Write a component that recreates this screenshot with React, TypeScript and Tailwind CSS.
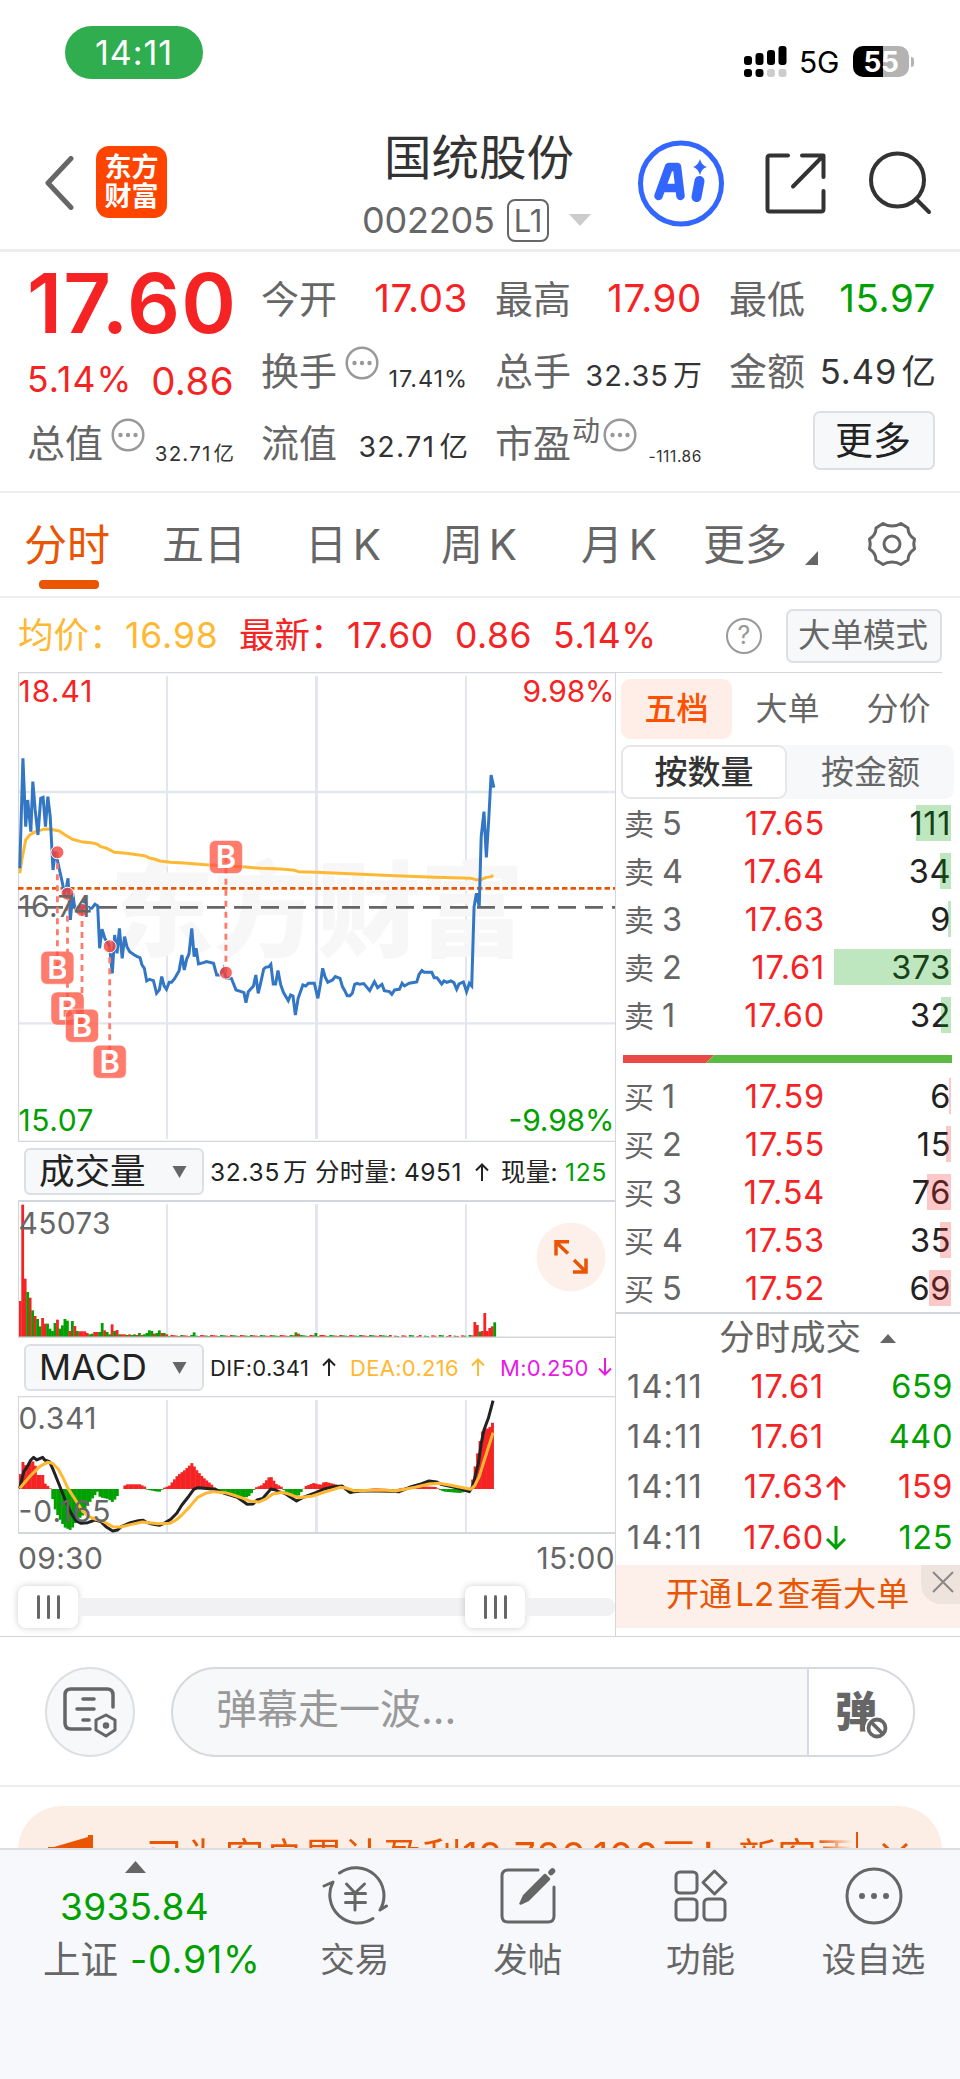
import type { ReactNode } from "react";

const FONT = "font-['Inter','Noto_Sans_CJK_SC',sans-serif]";

// Chart samples: x is 2.529 units per pixel, y is 3 units per pixel
const PRICE =
  "50,625 58,295 65,500 70,420 78,515 83,365 89,450 96,525 103,415 109,412 115,500 121,410 127,470 134,630 140,575 145,600 158,670 163,700 167,690 172,655 178,780 184,700 188,735 195,755 208,750 214,715 220,745 232,745 240,733 247,738 252,865 258,808 265,835 277,858 284,940 290,825 296,880 302,805 309,895 315,830 321,860 328,875 340,885 347,890 354,893 359,915 365,925 371,963 378,958 388,962 396,1000 403,990 409,950 415,978 421,988 428,967 434,967 441,957 453,932 460,885 466,930 472,898 478,882 485,805 491,890 496,865 502,912 515,908 522,905 540,910 548,945 555,945 565,925 572,955 585,955 597,990 610,995 617,998 622,1028 628,995 641,978 647,945 653,1000 660,965 667,927 672,922 680,920 685,913 691,972 697,972 703,932 710,975 717,998 729,1022 735,1005 741,1008 747,1065 754,1015 766,975 773,978 780,970 795,970 804,1015 810,975 816,925 822,950 829,967 841,960 848,950 860,955 866,980 872,992 878,1007 885,1007 891,1000 897,973 903,970 910,973 920,971 935,992 947,965 955,983 966,973 972,992 985,995 991,1003 998,990 1010,988 1017,970 1023,978 1035,970 1054,966 1060,943 1067,932 1073,937 1092,937 1098,953 1105,953 1117,972 1123,963 1130,967 1140,963 1148,968 1155,988 1161,972 1172,966 1180,995 1187,970 1193,978 1199,740 1205,700 1212,740 1217,530 1224,455 1230,592 1236,480 1242,345 1249,383";

const AVERAGE =
  "50,640 55,600 65,540 75,525 90,515 110,508 125,507 150,513 165,525 183,538 205,545 230,548 245,552 255,560 270,565 290,577 320,580 365,587 380,595 390,597 405,603 430,607 465,609 520,614 620,621 660,625 710,627 745,631 755,635 800,637 900,642 1000,647 1100,652 1190,655 1203,659 1217,659 1228,653 1243,650 1247,645";

const DIF =
  "50,325 60,275 68,262 78,240 85,232 93,240 108,232 113,240 125,245 133,265 150,315 165,360 180,400 192,422 205,430 222,428 240,420 255,425 268,440 285,453 297,450 307,440 330,428 350,422 362,421 370,427 385,432 403,436 415,430 432,418 447,400 460,375 478,348 490,328 500,323 545,328 560,337 600,352 625,373 640,372 650,360 665,355 685,327 697,330 705,335 720,340 735,352 750,363 765,353 800,337 820,327 845,320 865,318 885,337 920,332 990,334 1010,335 1040,320 1065,312 1085,303 1105,306 1115,313 1160,325 1187,335 1195,320 1210,250 1217,190 1224,150 1235,115 1247,62";

const DEA =
  "50,325 75,290 100,260 120,247 133,250 147,267 160,295 172,325 190,358 210,395 225,410 240,417 262,425 285,440 305,441 330,434 360,426 400,431 430,430 445,420 460,405 480,380 500,352 520,340 540,335 570,338 590,345 615,355 635,364 655,366 675,355 690,342 715,337 730,342 755,353 790,348 830,333 860,322 875,324 895,332 970,330 1000,333 1050,322 1085,312 1110,310 1140,316 1190,328 1200,318 1212,290 1225,240 1247,158";

const HISTOGRAM = [
  [50, 20], [58, 83], [70, 65], [80, 80], [88, 85], [96, 42], [110, 42], [116, 16], [128, 3], [132, -5],
  [137, -50], [150, -85], [165, -115], [181, -124], [195, -95], [210, -80], [222, -50], [248, -8],
  [255, -25], [275, -30], [287, -40], [300, -18], [304, 0], [314, 0], [318, 14], [355, 14], [370, 6],
  [373, -2], [400, -8], [409, -8], [413, 2], [430, 10], [450, 40], [470, 58], [487, 78], [500, 55],
  [515, 35], [540, 10], [547, -2], [600, -22], [628, -25], [641, -8], [647, 4], [665, 12], [685, 40],
  [700, 15], [716, 5], [720, -5], [735, -15], [755, -22], [768, -2], [773, 8], [795, 18], [812, 12],
  [822, 22], [850, 14], [868, 6], [880, -8], [890, -16], [905, -3], [950, 2], [985, 0], [1000, -2],
  [1017, 3], [1060, 8], [1105, 6], [1112, -2], [1125, -8], [1165, -12], [1190, -5], [1197, 30],
  [1208, 100], [1220, 170], [1230, 185], [1238, 178], [1245, 200], [1252, 195],
];

// Positive = up minute (red), negative = down minute (green)
const VOLUME = [
  108, 397, 175, -135, 118, -80, 63, -54, -32, 57, 40, -40, -25, -18, -42, 52, -25, -35, -54, -49, 18, -48,
  33, -18, 17, 17, 17, 12, -8, -10, 15, 15, -15, -42, 20, -15, -8, 38, -18, 21, -8, 8, 8, -6, 8, -6, -8, 6,
  -12, 6, -8, -12, -20, -18, 10, -12, -20, 12, -12, 8,
];
const SPIKES: Record<number, number> = {
  70: -14, 111: -14, 112: 10, 119: -12, 122: 6, 183: 45, 184: 36, 185: -16, 186: 18, 187: 72, 188: 18,
  189: 27, 190: 32, 191: -44,
};
const STEP = 6.283;

function volumeAt(i: number) {
  if (i < VOLUME.length) return VOLUME[i];
  if (SPIKES[i]) return SPIKES[i];
  const size = 3 + ((i * 7) % 4);
  return (i * 13) % 11 < 6 ? size : -size;
}

function histogramAt(x: number) {
  for (let i = 1; i < HISTOGRAM.length; i++) {
    const [x0, y0] = HISTOGRAM[i - 1];
    const [x1, y1] = HISTOGRAM[i];
    if (x <= x1) return y0 + ((y1 - y0) * (x - x0)) / (x1 - x0);
  }
  return 0;
}

const MARKERS = [
  { x: 57.4, dot: 852.3, label: 967.7 },
  { x: 67.5, dot: 893.7, label: 1008.5 },
  { x: 82, dot: 910, label: 1025.7 },
  { x: 109.7, dot: 946.3, label: 1061.7 },
  { x: 225.9, dot: 972.7, label: 857 },
];

const SELLS = [
  { n: 5, price: "17.65", vol: 111, bar: 35 },
  { n: 4, price: "17.64", vol: 34, bar: 11 },
  { n: 3, price: "17.63", vol: 9, bar: 3 },
  { n: 2, price: "17.61", vol: 373, bar: 117 },
  { n: 1, price: "17.60", vol: 32, bar: 10 },
];

const BUYS = [
  { n: 1, price: "17.59", vol: 6, bar: 2 },
  { n: 2, price: "17.55", vol: 15, bar: 5 },
  { n: 3, price: "17.54", vol: 76, bar: 24 },
  { n: 4, price: "17.53", vol: 35, bar: 11 },
  { n: 5, price: "17.52", vol: 69, bar: 22 },
];

const TICKS = [
  { price: "17.61", arrow: "", vol: 659, up: false },
  { price: "17.61", arrow: "", vol: 440, up: false },
  { price: "17.63", arrow: "up", vol: 159, up: true },
  { price: "17.60", arrow: "down", vol: 125, up: false },
];

function StatusBar() {
  return (
    <div className="flex h-[110px] items-start justify-between pl-[65px] pr-[46px] pt-[26px]">
      <div className="flex h-[53px] w-[138px] items-center justify-center rounded-full bg-[#30ad4f] text-[34px] leading-none tracking-[1px] text-white">
        14:11
      </div>
      <div className="flex items-center pt-[19px]">
        <svg width="43" height="32" viewBox="0 0 43 32">
          <rect x="0" y="10" width="8" height="9" rx="3" />
          <rect x="11.5" y="7" width="8" height="12" rx="3" />
          <rect x="23" y="4" width="8" height="15" rx="3" />
          <rect x="34.5" y="0" width="8" height="19" rx="3" />
          <rect x="0" y="23" width="8" height="8" rx="3" />
          <rect x="11.5" y="23" width="8" height="8" rx="3" />
          <rect x="23" y="23" width="8" height="8" rx="3" fill="#ccc" />
          <rect x="34.5" y="23" width="8" height="8" rx="3" fill="#ccc" />
        </svg>
        <span className="ml-[12px] w-[41px] pt-[1px] text-[30px] leading-[32px] tracking-[-0.2px] text-black">5G</span>
        <div className="ml-[13px] flex h-[31px] w-[56px] items-center justify-center rounded-[10px] bg-[linear-gradient(90deg,#000_54%,#b3b3b3_54%)] text-[28px] font-bold leading-none tracking-[-0.5px] text-white">
          55
        </div>
        <div className="ml-[2px] h-[10px] w-[3px] rounded-r-full bg-[#b3b3b3]" />
      </div>
    </div>
  );
}

function Header() {
  return (
    <div className="flex h-[142px] items-start border-b-[3px] border-[#ededed] pl-[44px]">
      <svg className="mt-[46px]" width="30" height="54" viewBox="0 0 30 54" fill="none" stroke="#666" strokeWidth="5">
        <path d="M27 2.500L4 27L27 51.500" strokeLinecap="round" strokeLinejoin="round" />
      </svg>
      <div className="ml-[22px] mt-[36px] flex h-[72px] w-[71px] flex-col items-center justify-center rounded-[13px] bg-[#ff4400] text-[27px] font-bold leading-[29px] text-white">
        <span>东方</span>
        <span>财富</span>
      </div>
      <div className="ml-[195px] flex w-[231px] flex-col pt-[22px]">
        <div className="pl-[22px] text-[47.5px] leading-[52px] text-[#333]">国统股份</div>
        <div className="mt-[14px] flex items-center">
          <span className="w-[134px] text-[36px] leading-[44px] tracking-[-0.2px] text-[#666]">002205</span>
          <span className="ml-[11px] flex h-[43px] w-[42px] items-center justify-center rounded-[8px] border-2 border-[#666] text-[31px] leading-none text-[#666]">
            L1
          </span>
          <svg className="ml-[20px]" width="22" height="12" viewBox="0 0 22 12">
            <path d="M0 0H22L11 12Z" fill="#ccc" />
          </svg>
        </div>
      </div>
      <svg className="ml-[45px] mt-[30px]" width="86" height="87" viewBox="0 0 86 87">
        <circle cx="43" cy="43.500" r="40.500" fill="none" stroke="#3366ff" strokeWidth="5" />
        <path
          d="M20.500 56L31 27H39L42.500 56M25 48H41"
          fill="none"
          stroke="#3366ff"
          strokeWidth="8.500"
          strokeLinejoin="round"
          strokeLinecap="round"
        />
        <path d="M61.500 41L58.500 57" stroke="#3366ff" strokeWidth="10" strokeLinecap="round" />
        <path d="M62 19Q63.500 25.500 69 27Q63.500 28.500 62 35Q60 28.500 55 27Q60 25.500 62 19Z" fill="#3366ff" />
      </svg>
      <svg className="ml-[41px] mt-[43px]" width="61" height="61" viewBox="0 0 61 61" fill="none" stroke="#333" strokeWidth="4">
        <path d="M23 2.500H5Q2.500 2.500 2.500 5V56Q2.500 58.500 5 58.500H56Q58.500 58.500 58.500 56V38" strokeLinecap="round" />
        <path d="M37 2.500H58.500V24M57 4L28 33.500" strokeLinecap="round" strokeLinejoin="round" />
      </svg>
      <svg className="ml-[43px] mt-[41px]" width="64" height="64" viewBox="0 0 64 64" fill="none" stroke="#333" strokeWidth="4">
        <circle cx="28.500" cy="29" r="26.500" />
        <path d="M47 48L60 61" strokeLinecap="round" />
      </svg>
    </div>
  );
}

function MoreDots({ className }: { className?: string }) {
  return (
    <svg className={className} width="34" height="34" viewBox="0 0 34 34">
      <circle cx="17" cy="17" r="15.300" fill="none" stroke="#999" strokeWidth="2.500" />
      <circle cx="9.500" cy="17" r="2.200" fill="#999" />
      <circle cx="17" cy="17" r="2.200" fill="#999" />
      <circle cx="24.500" cy="17" r="2.200" fill="#999" />
    </svg>
  );
}

function Stat({ label, children, extra }: { label: string; children: ReactNode; extra?: ReactNode }) {
  return (
    <div className="flex h-[72px] w-[207px] items-center justify-between whitespace-nowrap">
      <div className="flex items-center">
        <span className="pt-[2px] text-[38px] leading-none text-[#666]">{label}</span>
        {extra}
      </div>
      {children}
    </div>
  );
}

function Quote() {
  return (
    <div className="flex h-[241px] gap-[27px] border-b-2 border-[#eee] pl-[27px] pt-[10px] leading-none text-[#333]">
      <div className="flex w-[207px] flex-col">
        <div className="flex h-[82px] items-center whitespace-nowrap text-[83px] font-semibold leading-none tracking-[1.1px] text-[#f52323]">
          17.60
        </div>
        <div className="flex h-[62px] items-center justify-between pt-[10px] text-[#f52323]">
          <span className="text-[35.5px] leading-none tracking-[1.1px]">5.14%</span>
          <span className="pt-[2px] text-[38.5px] leading-none tracking-[0.4px]">0.86</span>
        </div>
        <Stat label="总值" extra={<MoreDots className="mb-[15px] ml-[8px]" />}>
          <span className="pt-[24px] text-[20.5px] tracking-[1.2px]">
            32.71<span className="ml-[2px] tracking-normal">亿</span>
          </span>
        </Stat>
      </div>
      <div>
        <Stat label="今开">
          <span className="pt-[1px] text-[38.5px] tracking-[0.6px] text-[#f52323]">17.03</span>
        </Stat>
        <Stat label="换手" extra={<MoreDots className="mb-[15px] ml-[8px]" />}>
          <span className="pt-[18px] text-[23.5px] tracking-[0.9px]">17.41%</span>
        </Stat>
        <Stat label="流值">
          <span className="pt-[11px] text-[28.5px] tracking-[1.3px]">
            32.71<span className="ml-[4px] tracking-normal">亿</span>
          </span>
        </Stat>
      </div>
      <div>
        <Stat label="最高">
          <span className="pt-[1px] text-[38.5px] tracking-[0.6px] text-[#f52323]">17.90</span>
        </Stat>
        <Stat label="总手">
          <span className="pt-[11px] text-[29px] tracking-[1px]">
            32.35<span className="ml-[4px] tracking-normal">万</span>
          </span>
        </Stat>
        <Stat
          label="市盈"
          extra={
            <>
              <span className="mb-[22px] ml-[1px] text-[28px] leading-none text-[#666]">动</span>
              <MoreDots className="mb-[15px] ml-[3px]" />
            </>
          }
        >
          <span className="pt-[30px] text-[15.5px] tracking-[0.6px]">-111.86</span>
        </Stat>
      </div>
      <div>
        <Stat label="最低">
          <span className="pt-[1px] text-[38.5px] tracking-[0.6px] text-[#00a000]">15.97</span>
        </Stat>
        <Stat label="金额">
          <span className="pt-[4px] text-[34.5px] tracking-[1px]">
            5.49<span className="ml-[4px] tracking-normal">亿</span>
          </span>
        </Stat>
        <div className="flex h-[68px] items-center justify-end">
          <button className="mr-[1px] flex h-[59px] w-[122px] items-center justify-center rounded-[7px] border-2 border-[#dcdfe4] bg-[#f7f8fa] pr-[2px] text-[38px] leading-none text-[#222]">
            更多
          </button>
        </div>
      </div>
    </div>
  );
}

function Tabs() {
  return (
    <div className="flex h-[105px] items-start border-b-2 border-[#eee] pl-[24px] pt-[30px] text-[42px] leading-[44px] text-[#666] [word-spacing:-6px]">
      <div className="flex w-[138px] flex-col text-[#ea5504]">
        <span className="text-[43px]">分时</span>
        <span className="ml-[15px] mt-[13px] h-[9px] w-[60px] rounded-[4px] bg-[#ea5504]" />
      </div>
      <span className="w-[143px]">五日</span>
      <span className="w-[136px]">日 K</span>
      <span className="w-[140px]">周 K</span>
      <span className="w-[122px]">月 K</span>
      <span className="w-[102px]">更多</span>
      <svg className="mt-[28px]" width="13" height="14" viewBox="0 0 13 14">
        <path d="M13 0V14H0Z" fill="#666" />
      </svg>
      <svg className="-mt-[2px] ml-[49px]" width="50" height="46" viewBox="0 0 50 46" fill="none" stroke="#666" strokeWidth="3">
        <path
          d="M16 2.500Q20 5 25 5Q30 5 34 2.500L41 7Q41 14 47.500 18Q46 23 47.500 28Q41 32 41 39L34 43.500Q30 41 25 41Q20 41 16 43.500L9 39Q9 32 2.500 28Q4 23 2.500 18Q9 14 9 7Z"
          strokeLinejoin="round"
        />
        <circle cx="25" cy="23" r="8" />
      </svg>
    </div>
  );
}

function InfoBar() {
  return (
    <div className="flex h-[74px] items-center whitespace-nowrap pl-[18px] pt-[1px] text-[35.5px] leading-none">
      <span className="w-[107px] text-[#ffb833]">均价：</span>
      <span className="w-[114px] tracking-[0.9px] text-[#ffb833]">16.98</span>
      <span className="w-[108px] text-[#f52323]">最新：</span>
      <span className="w-[108px] tracking-[0.6px] text-[#f52323]">17.60</span>
      <span className="w-[98px] tracking-[0.5px] text-[#f52323]">0.86</span>
      <span className="w-[173px] tracking-[0.8px] text-[#f52323]">5.14%</span>
      <span className="flex h-[36px] w-[36px] items-center justify-center rounded-full border-[2.5px] border-[#999] text-[25px] text-[#999]">
        ?
      </span>
      <button className="ml-[24px] flex h-[54px] w-[156px] items-center justify-center rounded-[7px] border-2 border-[#dcdfe4] bg-[#f7f8fa] pr-[2px] pt-[1px] text-[32.5px] leading-none text-[#666]">
        大单模式
      </button>
    </div>
  );
}

function Grid({ top, bottom }: { top: number; bottom: number }) {
  return (
    <g stroke="#e3e6ee" strokeWidth="2">
      <path d={`M167 ${top}V${bottom}M466 ${top}V${bottom}`} />
      <path d={`M316.500 ${top}V${bottom}`} strokeWidth="3" />
    </g>
  );
}

function PriceChart() {
  return (
    <svg className="block" width="597" height="470" viewBox="18 672 597 470">
      <Grid top={676} bottom={1139} />
      <path d="M18 792H615M18 1023.300H615" stroke="#e3e6ee" strokeWidth="2.300" />
      <path d="M18.500 672V1142M18 672.500H615M18 1141.500H615" stroke="#d3d6dc" strokeWidth="1.300" fill="none" />
      <text x="110" y="949" fontSize="104" fontWeight="900" fill="#f7f7f8" textLength="414">
        东方财富
      </text>
      <path d="M18 907.300H615" stroke="#666" strokeWidth="2.800" strokeDasharray="18 9" />
      <path d="M18 888.300H615" stroke="#ea5504" strokeWidth="2.800" strokeDasharray="5.500 3" />
      <g transform="translate(0 660) scale(0.3954 0.3333)" fill="none" strokeWidth="3">
        <polyline points={AVERAGE} stroke="#ffb833" vectorEffect="non-scaling-stroke" strokeLinejoin="round" />
        <polyline points={PRICE} stroke="#3276c4" vectorEffect="non-scaling-stroke" />
      </g>
      {MARKERS.map((m) => (
        <g key={m.x}>
          <path d={`M${m.x} ${m.dot}V${m.label}`} stroke="#ff7a6b" strokeWidth="2.800" strokeDasharray="6 5" />
          <circle cx={m.x} cy={m.dot} r="6.500" fill="#f0433f" fillOpacity="0.8" stroke="#fff" strokeWidth="1" />
          <rect
            x={m.x - 16.5}
            y={m.label - 16.5}
            width="33"
            height="33"
            rx="6"
            fill="#ff5643"
            fillOpacity="0.78"
            stroke="#fff"
            strokeOpacity="0.5"
          />
          <text x={m.x} y={m.label + 11} fill="#fff" fontSize="31" fontWeight="600" textAnchor="middle">
            B
          </text>
        </g>
      ))}
      <g fontSize="30">
        <text x="18.500" y="702" fill="#f52323" textLength="74">18.41</text>
        <text x="18.500" y="917" fill="#666" textLength="74">16.74</text>
        <text x="18.500" y="1131" fill="#00a000" textLength="75">15.07</text>
        <text x="614.500" y="702" fill="#f52323" textAnchor="end" textLength="92">9.98%</text>
        <text x="614.500" y="1131" fill="#00a000" textAnchor="end" textLength="106">-9.98%</text>
      </g>
    </svg>
  );
}

function IndicatorSelect({ label }: { label: string }) {
  return (
    <div className="flex h-[47px] w-[180px] shrink-0 items-center justify-between rounded-[6px] border-2 border-[#dcdfe4] bg-[#f7f8fa] pl-[13px] pr-[15px] pt-[1px] text-[35.5px] leading-none text-[#222]">
      {label}
      <svg width="15" height="12" viewBox="0 0 15 12">
        <path d="M0.500 0H14.500L7.500 12Z" fill="#666" />
      </svg>
    </div>
  );
}

function VolumeChart() {
  const bars = Array.from({ length: 192 }, (_, i) => ({ i, v: volumeAt(i) })).filter(
    ({ i }) => i < 150 || i > 182 || i % 3 !== 0,
  );
  return (
    <svg className="block" width="597" height="138" viewBox="18 1200 597 138">
      <Grid top={1204} bottom={1337} />
      {bars.map(({ i, v }) => (
        <rect
          key={i}
          x={18.8 + (i * STEP) / 2.529}
          y={1337 - Math.abs(v) / 3}
          width="2.800"
          height={Math.abs(v) / 3}
          fill={v > 0 ? "#f52323" : "#00a000"}
        />
      ))}
      <path d="M18 1201H615M18 1337.500H615" stroke="#d3d6dc" strokeWidth="2" />
      <path d="M18.500 1201V1337" stroke="#d3d6dc" />
      <text x="18.500" y="1234" fontSize="30" fill="#666" textLength="92">45073</text>
      <circle cx="571" cy="1257" r="34.500" fill="#fdf0ea" />
      <g fill="none" stroke="#ea5504" strokeWidth="3.500">
        <path d="M569 1241.800H556V1255.500M557 1243L568 1253.500" />
        <path d="M573 1272H586V1258.500M585 1271L574 1260" />
      </g>
    </svg>
  );
}

function MacdChart() {
  return (
    <svg className="block" width="597" height="138" viewBox="18 1396 597 138">
      <Grid top={1400} bottom={1532} />
      <path d="M18 1396.600H615" stroke="#d3d6dc" strokeWidth="1.300" />
      <path d="M18 1533H615" stroke="#d3d6dc" strokeWidth="2" />
      <path d="M18.500 1396V1533" stroke="#d3d6dc" />
      {Array.from({ length: 192 }, (_, i) => {
        const v = histogramAt(50 + (i + 0.5) * STEP) / 3;
        return (
          <rect
            key={i}
            x={19 + (i * STEP) / 2.529}
            y={v > 0 ? 1489 - v : 1489}
            width="2.900"
            height={Math.abs(v)}
            fill={v > 0 ? "#f52323" : "#00a000"}
          />
        );
      })}
      <g transform="translate(0 1380) scale(0.3954 0.3333)" fill="none" strokeWidth="3" strokeLinejoin="round">
        <polyline points={DIF} stroke="#222" vectorEffect="non-scaling-stroke" />
        <polyline points={DEA} stroke="#ffb833" vectorEffect="non-scaling-stroke" />
      </g>
      <g fontSize="30" fill="#666">
        <text x="18.500" y="1429" textLength="78">0.341</text>
        <text x="18.500" y="1522" textLength="92">-0.165</text>
      </g>
    </svg>
  );
}

function Arrow({ down, className }: { down?: boolean; className?: string }) {
  return (
    <svg className={className} width="14" height="18" viewBox="0 0 14 18" fill="none" stroke="currentColor" strokeWidth="2">
      <path d={down ? "M7 0V16M1 10.500L7 16.500L13 10.500" : "M7 18V2M1 7.500L7 1.500L13 7.500"} />
    </svg>
  );
}

function Handle() {
  return (
    <div className="flex h-[42px] w-[60px] items-center justify-center gap-[7px] rounded-[8px] bg-white shadow-[0_0_7px_rgba(0,0,0,0.2)]">
      <span className="h-[24px] w-[3px] rounded-full bg-[#666]" />
      <span className="h-[24px] w-[3px] rounded-full bg-[#666]" />
      <span className="h-[24px] w-[3px] rounded-full bg-[#666]" />
    </div>
  );
}

function Charts() {
  return (
    <div className="w-[615px] pl-[18px]">
      <PriceChart />
      <div className="flex h-[58px] items-center whitespace-nowrap pl-[6px] pt-[1px] text-[24.5px] leading-none text-[#222]">
        <IndicatorSelect label="成交量" />
        <span className="ml-[6px] w-[105px] pt-[1px] tracking-[0.7px]">
          32.35<span className="ml-[3px] tracking-normal">万</span>
        </span>
        <span className="w-[89px] pt-[1px] tracking-[0.3px]">分时量:</span>
        <span className="w-[71px] pt-[1px] tracking-[0.5px]">4951</span>
        <Arrow />
        <span className="ml-[12px] w-[64px] pt-[1px] tracking-[0.3px]">现量:</span>
        <span className="pt-[1px] tracking-[0.8px] text-[#00a000]">125</span>
      </div>
      <VolumeChart />
      <div className="flex h-[58px] items-center whitespace-nowrap pl-[6px] text-[22px] leading-none tracking-[0.3px] text-[#222]">
        <IndicatorSelect label="MACD" />
        <span className="ml-[6px] w-[112px] pt-[1px]">DIF:0.341</span>
        <Arrow />
        <span className="ml-[14px] w-[121px] pt-[1px] text-[#ffb833]">DEA:0.216</span>
        <Arrow className="text-[#ffb833]" />
        <span className="ml-[15px] w-[98px] pt-[1px] text-[#e619e6]">M:0.250</span>
        <Arrow down className="shrink-0 text-[#e619e6]" />
      </div>
      <MacdChart />
      <div className="flex h-[48px] items-center justify-between text-[30px] leading-none tracking-[0.3px] text-[#666]">
        <span>09:30</span>
        <span>15:00</span>
      </div>
      <div className="flex h-[50px] items-center">
        <Handle />
        <div className="h-[18px] w-[387px] bg-[#f1f1f4]" />
        <Handle />
        <div className="h-[18px] w-[90px] rounded-r-[8px] bg-[#f1f1f4]" />
      </div>
    </div>
  );
}

type Level = { n: number; price: string; vol: number; bar: number };

function LevelRow({ side, level, tint }: { side: string; level: Level; tint: string }) {
  return (
    <div className="relative flex h-[48px] items-center pl-[8px] pr-[9px] pt-[2px] text-[32.5px] leading-none">
      <span className="w-[38px] text-[30px] text-[#666]">{side}</span>
      <span className="w-[30px] text-[#666]">{level.n}</span>
      <span className="w-[133px] text-right tracking-[0.8px] text-[#f52323]">{level.price}</span>
      <span className="flex-1 text-right tracking-[0.6px] text-[#222]">{level.vol}</span>
      <div className={`absolute right-[9px] top-[6px] h-[36px] ${tint}`} style={{ width: level.bar }} />
    </div>
  );
}

function OrderBook() {
  return (
    <div className="flex w-[345px] flex-col border-l border-[#d3d6dc]">
      <div className="mr-[18px] h-px bg-[#d3d6dc]" />
      <div className="ml-[5px] mt-[6px] flex h-[60px] text-[32px] leading-[60px] text-[#666]">
        <span className="w-[111px] rounded-[9px] bg-[#ffeee7] text-center font-medium text-[#ff5000]">五档</span>
        <span className="w-[111px] text-center">大单</span>
        <span className="w-[111px] text-center">分价</span>
      </div>
      <div className="ml-[5px] mt-[6px] flex h-[54px] w-[333px] rounded-[9px] bg-[#f7f8fa] text-[33px] leading-[50px] text-[#666]">
        <span className="w-[166px] rounded-[9px] border-2 border-[#e6e7e9] bg-white text-center font-medium text-[#333]">
          按数量
        </span>
        <span className="flex-1 pt-[2px] text-center">按金额</span>
      </div>
      <div>
        {SELLS.map((level) => (
          <LevelRow key={level.n} side="卖" level={level} tint="bg-[#00a000]/25" />
        ))}
      </div>
      <svg className="ml-[7px] mt-[16px]" width="329" height="8" viewBox="0 0 329 8">
        <path d="M0 0H91L83 8H0Z" fill="#eb4848" />
        <path d="M91 0H329V8H83Z" fill="#5aba41" />
      </svg>
      <div className="pt-[9px]">
        {BUYS.map((level) => (
          <LevelRow key={level.n} side="买" level={level} tint="bg-[#f52323]/25" />
        ))}
      </div>
      <div className="flex h-[50px] items-center border-t-2 border-[#d3d6dc] pl-[103px] text-[35.5px] leading-none text-[#666]">
        分时成交
        <svg className="ml-[19px]" width="16" height="9" viewBox="0 0 16 9">
          <path d="M8 0L16 9H0Z" fill="#666" />
        </svg>
      </div>
      {TICKS.map((tick, i) => (
        <div key={i} className="flex h-[50.3px] items-center pl-[11px] pr-[7px] text-[32.5px] leading-none">
          <span className="w-[76px] tracking-[1.2px] text-[#666]">14:11</span>
          <span className="w-[121px] text-right tracking-[0.8px] text-[#f52323]">{tick.price}</span>
          <span className="ml-[2px] w-[20px]">
            {tick.arrow && (
              <svg
                className={tick.arrow === "up" ? "text-[#f52323]" : "text-[#00a000]"}
                width="20"
                height="24"
                viewBox="0 0 20 24"
                fill="none"
                stroke="currentColor"
                strokeWidth="3"
              >
                <path d={tick.arrow === "up" ? "M10 24V2M1 11L10 2L19 11" : "M10 0V22M1 13L10 22L19 13"} />
              </svg>
            )}
          </span>
          <span
            className={
              tick.up
                ? "flex-1 text-right tracking-[0.6px] text-[#f52323]"
                : "flex-1 text-right tracking-[0.6px] text-[#00a000]"
            }
          >
            {tick.vol}
          </span>
        </div>
      ))}
      <div className="relative mt-[2px] flex h-[63px] items-center bg-[#fdf0ea] pb-[4px] pl-[50px] text-[33px] leading-none text-[#ea5504] [word-spacing:-6px]">
        开通 L2 查看大单
        <div className="absolute right-0 top-0 flex h-[39px] w-[39px] items-center justify-center rounded-bl-[20px] bg-[#efe3de] pb-[5px] pl-[5px]">
          <svg width="22" height="22" viewBox="0 0 22 22" stroke="#888" strokeWidth="2">
            <path d="M1 1L21 21M21 1L1 21" />
          </svg>
        </div>
      </div>
    </div>
  );
}

function CommentBar() {
  return (
    <div className="flex h-[150px] items-start border-b-2 border-[#eee] pl-[45px] pt-[30px]">
      <div className="flex h-[90px] w-[90px] items-center justify-center rounded-full border-2 border-[#dcdfe4] bg-[#f7f8fa]">
        <svg width="54" height="52" viewBox="0 0 54 52" fill="none" stroke="#666" strokeWidth="3.500" strokeLinecap="round">
          <path d="M50 21V9Q50 3 44 3H8Q2 3 2 9V37Q2 43 8 43H27" />
          <path d="M20 13H31M14 23H31M20 34H26" />
          <path d="M43 29L52 34V44L43 50L33 44V34Z" strokeLinejoin="round" strokeWidth="3" />
          <circle cx="43" cy="39.500" r="1.500" />
        </svg>
      </div>
      <div className="ml-[36px] flex h-[90px] w-[744px] overflow-hidden rounded-full border-2 border-[#d6d9df] bg-[#f7f8fa]">
        <span className="flex-1 pl-[43px] pt-[18px] text-[41px] leading-[44px] text-[#999]">弹幕走一波...</span>
        <div className="relative w-[106px] border-l-2 border-[#d6d9df] bg-white pl-[26px] pt-[20px] text-[42px] font-black leading-[46px] text-[#666]">
          弹
          <svg className="absolute left-[55px] top-[46px]" width="26" height="26" viewBox="0 0 26 26">
            <circle cx="13" cy="13" r="12" fill="#fff" />
            <circle cx="13" cy="13" r="8.500" fill="none" stroke="#666" strokeWidth="3.800" />
            <path d="M7 7L19 19" stroke="#666" strokeWidth="3.800" />
          </svg>
        </div>
      </div>
    </div>
  );
}

function Promo() {
  return (
    <div className="h-[61px] overflow-hidden px-[18px] pt-[19px]">
      <div className="flex h-[88px] items-start rounded-[44px] bg-[#fdeee5] pl-[28px] pt-[29px] text-[#ea5504]">
        <svg width="48" height="40" viewBox="0 0 48 40">
          <path d="M47 0V40L8 28H2V12H8L42 2V0Z" fill="#ea5504" />
        </svg>
        <span className="ml-[52px] w-[707px] overflow-hidden whitespace-nowrap bg-[linear-gradient(90deg,#ea5504_95%,#fdeee5)] bg-clip-text text-[39px] leading-[44px] tracking-[0.5px] text-transparent">
          已为客户累计盈利12,726,100元！新客更
        </span>
        <span className="-mt-[3px] ml-[3px] h-[50px] w-[2px] bg-[#ea5504]" />
        <svg className="ml-[24px] mt-[8px]" width="26" height="24" viewBox="0 0 26 24" stroke="#ea5504" strokeWidth="3">
          <path d="M1 1L25 23M25 1L1 23" />
        </svg>
      </div>
    </div>
  );
}

function NavItem({ label, children }: { label: string; children: ReactNode }) {
  return (
    <div className="flex w-[173.5px] flex-col items-center pt-[4px] text-[34.5px] leading-[40px] text-[#666]">
      <svg width="66" height="60" viewBox="0 0 66 60" fill="none" stroke="#666" strokeWidth="3" strokeLinecap="round">
        {children}
      </svg>
      <span className="mt-[15px]">{label}</span>
    </div>
  );
}

function BottomNav() {
  return (
    <div className="flex h-[231px] border-t-2 border-[#dcdee0] bg-[#f7f8fb] pt-[11px]">
      <div className="flex w-[269px] flex-col pl-[43px]">
        <svg className="ml-[82px]" width="21" height="12" viewBox="0 0 21 12">
          <path d="M10.500 0L21 12H0Z" fill="#666" />
        </svg>
        <span className="ml-[17px] mt-[12px] text-[37px] leading-[44px] tracking-[0.3px] text-[#00a000]">3935.84</span>
        <div className="mt-[9px] flex whitespace-nowrap text-[37.5px] leading-[44px] text-[#666]">
          <span className="w-[87px]">上证</span>
          <span className="tracking-[0.8px] text-[#00a000]">-0.91%</span>
        </div>
      </div>
      <NavItem label="交易">
        <path d="M17.500 8A28 28 0 0 1 58 45L64.500 41" strokeLinejoin="round" />
        <path d="M51 53.500A28 28 0 0 1 11 17L2 21" strokeLinejoin="round" />
        <path d="M24.500 19L33 28L42.500 19M33 28V45M23.500 28.500H43.500M23.500 37.500H43.500" />
      </NavItem>
      <NavItem label="发帖">
        <path d="M43 5H13Q7 5 7 11V51Q7 57 13 57H53Q59 57 59 51V22" />
        <path d="M25.500 38.500L29 31L50 10L54 14L33 35Z" fill="#666" strokeLinejoin="round" strokeWidth="2.500" />
        <path d="M56 7.500L57.500 6" strokeWidth="5.500" />
      </NavItem>
      <NavItem label="功能">
        <rect x="8" y="7" width="21" height="21" rx="4" />
        <rect x="8" y="34" width="21" height="21" rx="4" />
        <rect x="36" y="34" width="21" height="21" rx="4" />
        <path d="M46.500 6L58 17.500L46.500 29L35 17.500Z" strokeLinejoin="round" />
      </NavItem>
      <NavItem label="设自选">
        <circle cx="33" cy="31" r="27" />
        <g fill="#666" stroke="none">
          <circle cx="21" cy="31" r="3" />
          <circle cx="33" cy="31" r="3" />
          <circle cx="45" cy="31" r="3" />
        </g>
      </NavItem>
    </div>
  );
}

export default function App() {
  return (
    <div className={`h-[2079px] w-[960px] overflow-hidden bg-white ${FONT}`}>
      <StatusBar />
      <Header />
      <Quote />
      <Tabs />
      <InfoBar />
      <div className="flex h-[965px] border-b border-[#d3d6dc]">
        <Charts />
        <OrderBook />
      </div>
      <CommentBar />
      <Promo />
      <BottomNav />
    </div>
  );
}
